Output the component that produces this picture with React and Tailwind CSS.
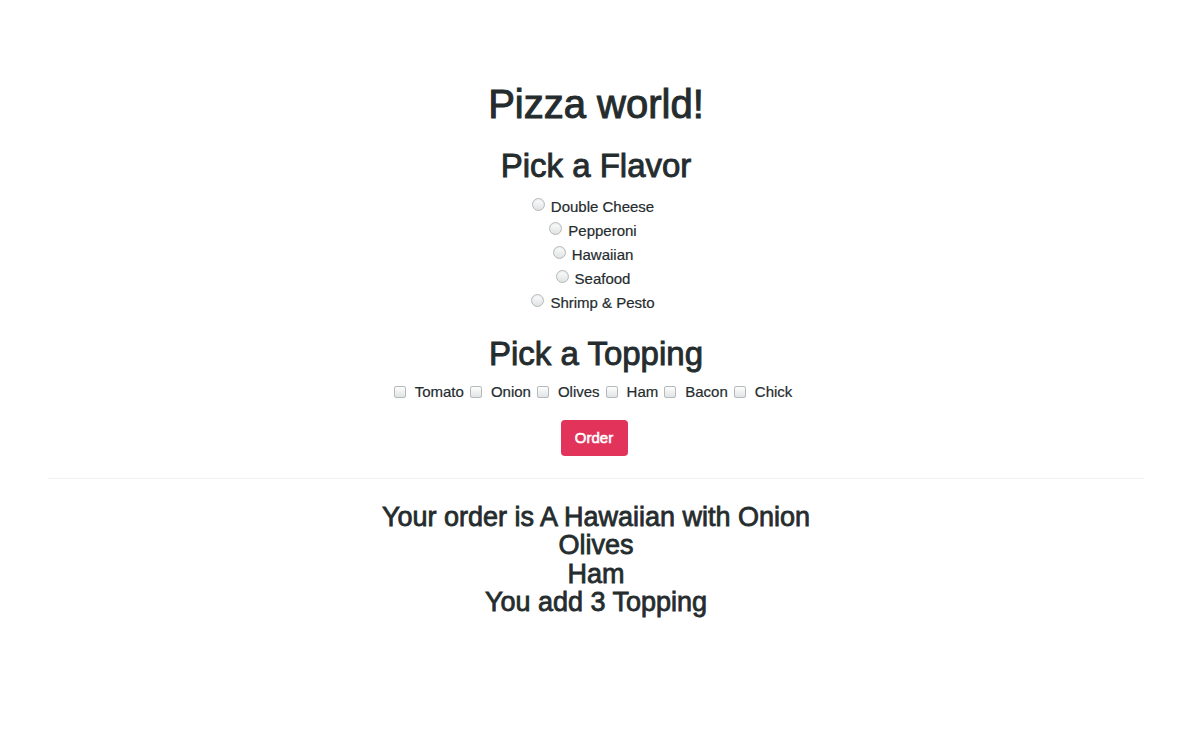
import React from 'react';

const flavors = ['Double Cheese', 'Pepperoni', 'Hawaiian', 'Seafood', 'Shrimp & Pesto'];
const toppings = ['Tomato', 'Onion', 'Olives', 'Ham', 'Bacon', 'Chick'];

function Radio() {
  return (
    <span className="mt-[3px] mr-[6px] h-[13px] w-[13px] shrink-0 rounded-full border border-[#b5b9bb] bg-gradient-to-b from-[#fdfdfd] to-[#dfe2e3] shadow-[inset_0_1px_1px_rgba(0,0,0,0.08)]" />
  );
}

function Checkbox() {
  return (
    <span className="mr-[9px] h-[12px] w-[12px] shrink-0 rounded-[2px] border border-[#b5b9bb] bg-gradient-to-b from-[#fdfdfd] to-[#e1e4e5]" />
  );
}

function App() {
  return (
    <div className="min-h-[750px] bg-white pt-[80px] text-center text-[#252c2e] font-['Liberation_Sans',Arial,sans-serif]">
      {/* Header */}
      <h1 className="text-[40px] leading-[48px] [-webkit-text-stroke:1px_#252c2e]">Pizza world!</h1>

      {/* Flavor */}
      <h2 className="mt-[18px] text-[33px] leading-[39px] [-webkit-text-stroke:0.9px_#252c2e]">Pick a Flavor</h2>
      <div className="mt-[10px] flex flex-col items-center text-[15px] leading-[24px] [-webkit-text-stroke:0.2px_#252c2e]">
        {flavors.map((f) => (
          <label key={f} className="mr-[6px] flex items-start">
            <Radio />
            <span>{f}</span>
          </label>
        ))}
      </div>

      {/* Toppings */}
      <h2 className="mt-[19px] text-[33px] leading-[39px] [-webkit-text-stroke:0.9px_#252c2e]">Pick a Topping</h2>
      <div className="mt-[7px] flex items-center justify-center text-[15px] leading-[24px] [-webkit-text-stroke:0.2px_#252c2e]">
        {toppings.map((t) => (
          <label key={t} className="flex items-center">
            <Checkbox />
            <span className="mr-[6px]">{t}</span>
          </label>
        ))}
      </div>

      <button className="mt-[16px] mr-[4px] h-[36px] w-[67px] rounded-[4px] bg-[#e2345a] text-[15px] text-white [-webkit-text-stroke:0.6px_#ffffff]">
        Order
      </button>

      <hr className="mx-[48px] mt-[22px] border-0 border-t border-[#eef1f1]" />

      {/* Result */}
      <div className="mt-[24px] text-[27px] leading-[28.4px] [-webkit-text-stroke:0.8px_#252c2e]">
        <div>Your order is A Hawaiian with Onion</div>
        <div>Olives</div>
        <div>Ham</div>
        <div>You add 3 Topping</div>
      </div>
    </div>
  );
}

export default App;
